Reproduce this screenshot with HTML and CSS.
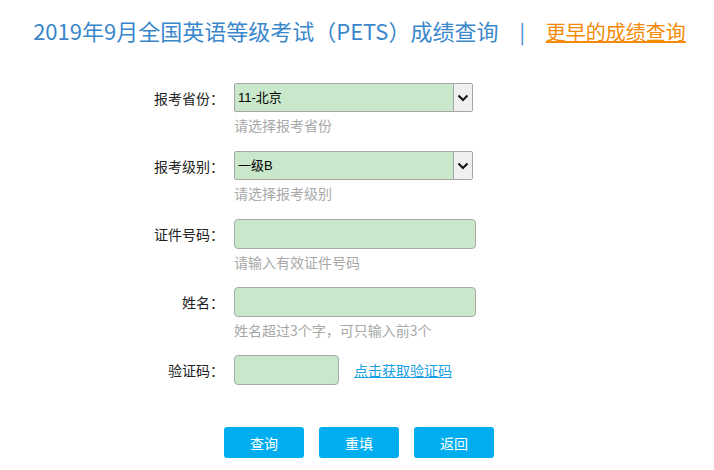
FILE: index.html
```html
<!DOCTYPE html>
<html lang="zh-CN">
<head>
<meta charset="utf-8">
<title>PETS成绩查询</title>
<link rel="stylesheet" href="styles.css">
</head>
<body>
<header class="top">
  <h1 class="title">2019年9月全国英语等级考试（PETS）成绩查询</h1>
  <span class="sep">|</span>
  <a class="older" href="#">更早的成绩查询</a>
</header>
<form class="form">
  <div class="row">
    <label class="label">报考省份：</label>
    <div class="field">
      <div class="select"><span class="select-text">11-北京</span><span class="arrow"><svg width="12" height="8" viewBox="0 0 12 8"><polyline points="1.5,1.5 6,6 10.5,1.5" fill="none" stroke="#111" stroke-width="2"/></svg></span></div>
      <div class="hint">请选择报考省份</div>
    </div>
  </div>
  <div class="row">
    <label class="label">报考级别：</label>
    <div class="field">
      <div class="select"><span class="select-text">一级B</span><span class="arrow"><svg width="12" height="8" viewBox="0 0 12 8"><polyline points="1.5,1.5 6,6 10.5,1.5" fill="none" stroke="#111" stroke-width="2"/></svg></span></div>
      <div class="hint">请选择报考级别</div>
    </div>
  </div>
  <div class="row">
    <label class="label">证件号码：</label>
    <div class="field">
      <input class="input" type="text">
      <div class="hint">请输入有效证件号码</div>
    </div>
  </div>
  <div class="row">
    <label class="label">姓名：</label>
    <div class="field">
      <input class="input" type="text">
      <div class="hint">姓名超过3个字，可只输入前3个</div>
    </div>
  </div>
  <div class="row">
    <label class="label">验证码：</label>
    <div class="field field-inline">
      <input class="input input-short" type="text">
      <a class="code-link" href="#">点击获取验证码</a>
    </div>
  </div>
  <div class="buttons">
    <button type="button" class="btn">查询</button>
    <button type="button" class="btn">重填</button>
    <button type="button" class="btn">返回</button>
  </div>
</form>
</body>
</html>
```

FILE: styles.css
```css
* { box-sizing: border-box; }
html, body { margin: 0; padding: 0; background: #fff; }
body {
  font-family: "Noto Sans CJK SC", "Microsoft YaHei", sans-serif;
  color: #222;
  width: 714px;
  height: 470px;
  overflow: hidden;
}
.top {
  display: flex;
  justify-content: center;
  align-items: baseline;
  padding-top: 15px;
  padding-left: 5px;
  height: 45px;
}
.title {
  margin: 0;
  font-size: 22px;
  font-weight: normal;
  line-height: 30px;
  color: #3a87cc;
  white-space: nowrap;
}
.sep {
  margin: 0 21px 0 21px;
  font-size: 20px;
  line-height: 30px;
  color: #3a87cc;
}
.older {
  font-size: 20px;
  line-height: 30px;
  color: #f58a07;
  text-decoration: underline;
  white-space: nowrap;
}
.form {
  margin-top: 38px;
}
.row {
  display: flex;
  height: 68px;
}
.label {
  width: 234px;
  padding-right: 10px;
  text-align: right;
  font-size: 14px;
  line-height: 30px;
  color: #222;
}
.field {
  display: flex;
  flex-direction: column;
}
.field-inline {
  flex-direction: row;
  align-items: center;
  height: 30px;
}
.select {
  display: flex;
  width: 239px;
  height: 29px;
  border: 1px solid #a6a6a6;
  border-radius: 2px;
  background: #c9e8cb;
}
.select-text {
  flex: 1;
  padding-left: 3px;
  font-family: "Liberation Sans", "Noto Sans CJK SC", sans-serif;
  font-size: 13px;
  line-height: 27px;
  color: #000;
}
.arrow {
  width: 19px;
  display: flex;
  align-items: center;
  justify-content: center;
  background: #f0f0f0;
  border-left: 1px solid #a6a6a6;
}
.input {
  display: block;
  width: 242px;
  height: 30px;
  margin: 0;
  padding: 0 4px;
  border: 1px solid #a9a9a9;
  border-radius: 4px;
  background: #c9e8cb;
  font-size: 13px;
}
.input-short {
  width: 105px;
}
.hint {
  margin-top: 4px;
  font-size: 14px;
  line-height: 18px;
  color: #a8a8a8;
  white-space: nowrap;
}
.code-link {
  margin-left: 15px;
  font-size: 14px;
  color: #18a0e3;
  text-decoration: underline;
  white-space: nowrap;
}
.buttons {
  display: flex;
  justify-content: center;
  gap: 15px;
  margin-top: 4px;
  padding-left: 4px;
}
.btn {
  width: 80px;
  height: 31px;
  border: none;
  border-radius: 3px;
  background: #00aeef;
  color: #fff;
  font-family: "Noto Sans CJK SC", sans-serif;
  font-size: 14px;
  padding: 0;
}
```
